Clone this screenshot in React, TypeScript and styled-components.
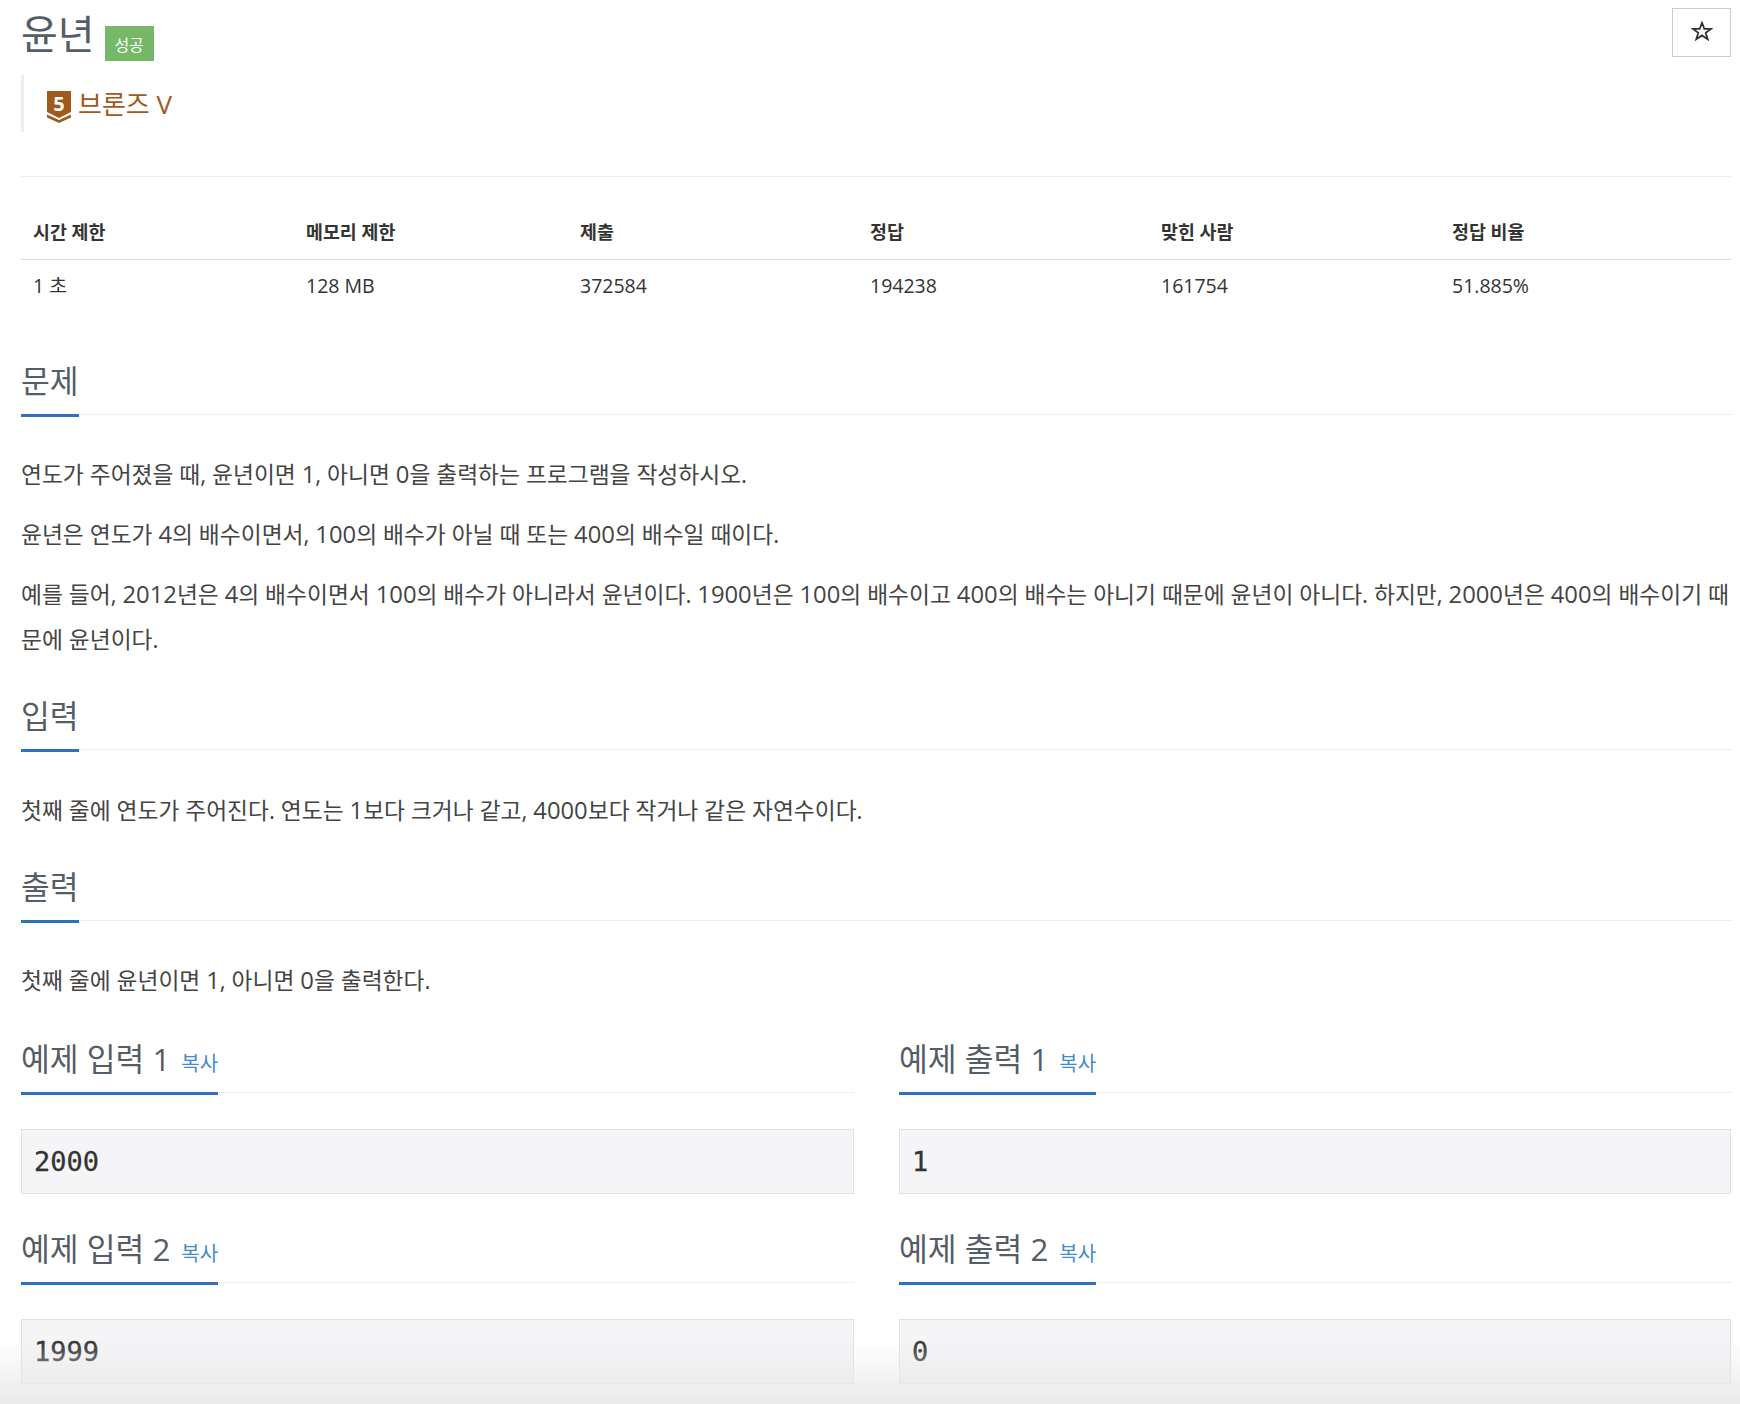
import { Fragment } from "react";
import styled, { createGlobalStyle } from "styled-components";

const GlobalStyle = createGlobalStyle`
  html, body {
    margin: 0;
    padding: 0;
    height: 1404px;
    overflow: hidden;
    background: #fff;
  }
`;

const FONT = `"Open Sans", "Noto Sans CJK KR", sans-serif`;

const Page = styled.div`
  box-sizing: border-box;
  width: 1740px;
  height: 1404px;
  padding: 0 9px 0 21px;
  font-family: ${FONT};
  color: #333;
  overflow: hidden;
`;

const TitleRow = styled.div`
  display: flex;
  align-items: flex-start;
  height: 75px;
`;

const Title = styled.h1`
  margin: 7px 10px 0 0;
  font-size: 40px;
  line-height: 54px;
  font-weight: 400;
  color: #555d66;
`;

const Badge = styled.span`
  margin-top: 26px;
  width: 49px;
  height: 35px;
  display: flex;
  align-items: center;
  justify-content: center;
  background: #74b868;
  color: #fff;
  font-size: 16px;
`;

const StarButton = styled.button`
  margin: 8px 0 0 auto;
  box-sizing: border-box;
  width: 59px;
  height: 49px;
  padding: 0 0 4px;
  display: flex;
  align-items: center;
  justify-content: center;
  background: #fff;
  border: 1px solid #ccc;
`;

const TierBlock = styled.div`
  display: flex;
  align-items: center;
  gap: 7px;
  height: 57px;
  padding-left: 23px;
  border-left: 3px solid #eee;
  color: #a05a1e;
  font-size: 26px;
  margin-bottom: 44px;
`;

const TierMark = styled.svg`
  margin-top: 6px;
  flex: none;
`;

const TierName = styled.span`
  margin-top: -2px;
`;

const Rule = styled.div`
  height: 1px;
  background: #eee;
`;

const StatTable = styled.div`
  display: grid;
  grid-template-columns: 273px 274px 290px 291px 291px 291px;
  margin-top: 37px;
  margin-bottom: 51px;
`;

const HeadCell = styled.div`
  padding: 0 12px;
  height: 45px;
  line-height: 36px;
  font-size: 18.4px;
  font-weight: 700;
  color: #333;
  border-bottom: 1px solid #ddd;
`;

const BodyCell = styled.div`
  padding: 0 12px;
  height: 52px;
  line-height: 51px;
  font-size: 19.5px;
  color: #333;
`;

const SectionHead = styled.div`
  display: flex;
  align-items: flex-end;
  height: 51px;
  border-bottom: 1px dotted #ddd;
`;

const HeadLabel = styled.h2`
  margin: 0 0 -3px;
  height: 51px;
  font-size: 31.3px;
  line-height: 37px;
  font-weight: 400;
  color: #555d66;
  border-bottom: 3px solid #2e72b8;
  white-space: nowrap;
`;

const CopyLink = styled.a`
  margin-left: 11px;
  font-size: 20px;
  color: #428bca;
`;

const Prose = styled.div<{ $top: number; $bottom: number }>`
  margin-top: ${({ $top }) => $top}px;
  margin-bottom: ${({ $bottom }) => $bottom}px;
`;

const Para = styled.p`
  margin: 0 0 15px;
  font-size: 22.75px;
  line-height: 45px;
  color: #444;
  word-break: break-all;
  &:last-child {
    margin-bottom: 0;
  }
`;

// digits run a little larger than the hangul in the reference
const Num = styled.span`
  font-size: 23.8px;
`;

const SampleGrid = styled.div`
  display: grid;
  grid-template-columns: 833px 832px;
  column-gap: 45px;
`;

const SampleCell = styled.div`
  height: 190px;
`;

const SampleBox = styled.pre`
  box-sizing: border-box;
  margin: 36px 0 0;
  height: 65px;
  padding: 0 12px;
  line-height: 63px;
  font-family: "DejaVu Sans Mono", monospace;
  font-size: 27px;
  color: #333;
  -webkit-text-stroke: 0.3px #333;
  background: #f5f5f8;
  border: 1px solid #e0e0e6;
`;

const BottomFade = styled.div`
  position: fixed;
  left: 0;
  right: 0;
  bottom: 0;
  height: 64px;
  background: linear-gradient(to bottom, rgba(232, 232, 232, 0), rgba(232, 232, 232, 0.9));
  pointer-events: none;
`;

const stats = [
  ["시간 제한", "1 초"],
  ["메모리 제한", "128 MB"],
  ["제출", "372584"],
  ["정답", "194238"],
  ["맞힌 사람", "161754"],
  ["정답 비율", "51.885%"],
];

const samples = [
  { left: "예제 입력 1", right: "예제 출력 1", input: "2000", output: "1" },
  { left: "예제 입력 2", right: "예제 출력 2", input: "1999", output: "0" },
];

function withNums(text: string) {
  return text.split(/(\d+)/).map((part, i) => (/^\d+$/.test(part) ? <Num key={i}>{part}</Num> : part));
}

function TierIcon() {
  return (
    <TierMark width="24" height="32" viewBox="0 0 24 32">
      <path d="M0 0H24V21L12 27L0 21Z" fill="#a05a1e" />
      <path d="M0 23.5L12 29L24 23.5V26.5L12 32L0 26.5Z" fill="#a05a1e" />
      <text x="12" y="20" textAnchor="middle" fontSize="20" fontWeight="700" fill="#fff" fontFamily="Open Sans, sans-serif">
        5
      </text>
    </TierMark>
  );
}

function StarIcon() {
  return (
    <svg width="22" height="20" viewBox="0 0 22 20">
      <path
        d="M11 1.8L13.3 7.9H20L14.7 11.8L16.7 18.2L11 14.4L5.3 18.2L7.3 11.8L2 7.9H8.7Z"
        fill="none"
        stroke="#333"
        strokeWidth="1.8"
      />
    </svg>
  );
}

export default function App() {
  return (
    <Page>
      <GlobalStyle />
      <TitleRow>
        <Title>윤년</Title>
        <Badge>성공</Badge>
        <StarButton>
          <StarIcon />
        </StarButton>
      </TitleRow>
      <TierBlock>
        <TierIcon />
        <TierName>브론즈 V</TierName>
      </TierBlock>
      <Rule />
      <StatTable>
        {stats.map(([head]) => (
          <HeadCell key={head}>{head}</HeadCell>
        ))}
        {stats.map(([head, value]) => (
          <BodyCell key={head}>{value}</BodyCell>
        ))}
      </StatTable>

      <SectionHead>
        <HeadLabel>문제</HeadLabel>
      </SectionHead>
      <Prose $top={37} $bottom={36}>
        <Para>{withNums("연도가 주어졌을 때, 윤년이면 1, 아니면 0을 출력하는 프로그램을 작성하시오.")}</Para>
        <Para>{withNums("윤년은 연도가 4의 배수이면서, 100의 배수가 아닐 때 또는 400의 배수일 때이다.")}</Para>
        <Para>
          {withNums(
            "예를 들어, 2012년은 4의 배수이면서 100의 배수가 아니라서 윤년이다. 1900년은 100의 배수이고 400의 배수는 아니기 때문에 윤년이 아니다. 하지만, 2000년은 400의 배수이기 때문에 윤년이다.",
          )}
        </Para>
      </Prose>

      <SectionHead>
        <HeadLabel>입력</HeadLabel>
      </SectionHead>
      <Prose $top={38} $bottom={36}>
        <Para>{withNums("첫째 줄에 연도가 주어진다. 연도는 1보다 크거나 같고, 4000보다 작거나 같은 자연수이다.")}</Para>
      </Prose>

      <SectionHead>
        <HeadLabel>출력</HeadLabel>
      </SectionHead>
      <Prose $top={37} $bottom={38}>
        <Para>{withNums("첫째 줄에 윤년이면 1, 아니면 0을 출력한다.")}</Para>
      </Prose>

      <SampleGrid>
        {samples.map((sample) => (
          <Fragment key={sample.left}>
            <SampleCell>
              <SectionHead>
                <HeadLabel>
                  {sample.left}
                  <CopyLink>복사</CopyLink>
                </HeadLabel>
              </SectionHead>
              <SampleBox>{sample.input}</SampleBox>
            </SampleCell>
            <SampleCell>
              <SectionHead>
                <HeadLabel>
                  {sample.right}
                  <CopyLink>복사</CopyLink>
                </HeadLabel>
              </SectionHead>
              <SampleBox>{sample.output}</SampleBox>
            </SampleCell>
          </Fragment>
        ))}
      </SampleGrid>
      <BottomFade />
    </Page>
  );
}
